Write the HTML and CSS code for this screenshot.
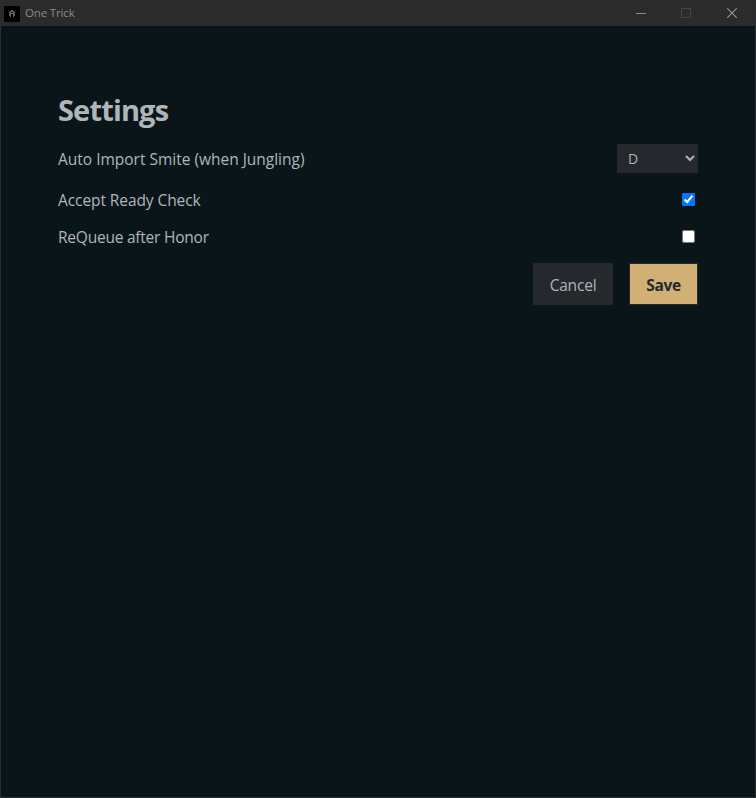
FILE: index.html
```html
<!DOCTYPE html>
<html lang="en">
<head>
<meta charset="utf-8">
<title>One Trick</title>
<link rel="stylesheet" href="styles.css">
</head>
<body>
<div class="window">
  <header class="titlebar">
    <svg class="app-icon" width="16" height="16" viewBox="0 0 16 16">
      <rect width="16" height="16" fill="#000"/>
      <path d="M7 4h2v1h1v1h1v4h-1v1H9V8H7v3H6v-1H5V6h1V5h1z" fill="#566067"/>
      <path d="M7 6h2v1H7z" fill="#1c2124"/>
    </svg>
    <span class="app-name">One Trick</span>
    <div class="controls">
      <svg class="minimize" width="10" height="10" viewBox="0 0 10 10"><path d="M0 5.5h10" stroke="#8a8a8a"/></svg>
      <svg width="10" height="10" viewBox="0 0 10 10"><path d="M.5.5h9v9h-9z" fill="none" stroke="#464646"/></svg>
      <svg class="close" width="10" height="10" viewBox="0 0 10 10"><path d="M.2.2l9.6 9.6M9.8.2L.2 9.8" stroke="#969696" stroke-width="1.1"/></svg>
    </div>
  </header>
  <main class="settings">
    <h1><span class="heading-text">Settings</span></h1>
    <label class="row row-select"><span class="smite">Auto Import Smite (when Jungling)</span>
      <select><option>D</option><option>F</option></select></label>
    <label class="row row-accept"><span class="accept">Accept Ready Check</span><input type="checkbox" checked></label>
    <label class="row row-requeue"><span class="requeue">ReQueue after Honor</span><input type="checkbox"></label>
    <div class="actions">
      <button class="cancel">Cancel</button>
      <button class="save">Save</button>
    </div>
  </main>
</div>
</body>
</html>
```
FILE: styles.css
```css
* { box-sizing: border-box; }
body {
  margin: 0;
  background: #0a151a;
  color: #b0b5b9;
  font: 15.5px/24px "Segoe UI", "Open Sans", "Noto Sans", sans-serif;
}
.window {
  height: 798px;
  border: 1px solid #2b2d2e;
  overflow: hidden;
}
.titlebar {
  display: flex;
  align-items: center;
  height: 25px;
  padding-left: 3px;
  background: #2b2b2b;
  color: #8a8a8a;
}
.app-icon { flex: none; }
.app-name {
  margin: 0 0 2px 5px;
  font-size: 11.5px;
  letter-spacing: -0.15px;
  white-space: nowrap;
}
.controls {
  display: flex;
  align-self: flex-start;
  margin: 7px 0 0 auto;
  padding-right: 18px;
}
.controls svg { display: block; }
.minimize { margin-right: 35px; }
.close { margin-left: 36px; }
.settings {
  width: 640px;
  margin: 66px 0 0 57px;
}
h1 {
  height: 36px;
  margin: 0 0 16px;
  font-size: 29px;
  line-height: 36px;
  font-weight: 700;
}
.heading-text { letter-spacing: -0.85px; }
.row {
  display: flex;
  justify-content: space-between;
  align-items: center;
  white-space: nowrap;
}
.smite { letter-spacing: -0.01px; }
.accept { letter-spacing: -0.08px; }
.requeue { letter-spacing: -0.23px; }
.row-select { height: 29px; }
.row-accept { height: 24px; margin-top: 15px; }
.row-requeue { height: 24px; margin-top: 13px; }
select {
  width: 81px;
  height: 29px;
  padding: 0 0 1px 7px;
  border: 0;
  border-radius: 0;
  background: #25282d;
  color: #b0b5b9;
  font: 14px "Segoe UI", "Open Sans", sans-serif;
}
input {
  width: 13px;
  height: 13px;
  margin: 0 3px 2px 4px;
}
.actions {
  display: flex;
  justify-content: flex-end;
  gap: 16px;
  margin-top: 14px;
}
button {
  height: 42px;
  padding: 1px 0 0;
  border: 1px solid #25282d;
  border-radius: 0;
  background: #25282d;
  color: #b0b5b9;
  font: inherit;
  letter-spacing: -0.2px;
}
.cancel { width: 80px; }
.save {
  width: 69px;
  background: #d2af74;
  color: #25282d;
  font-weight: 700;
  letter-spacing: -0.3px;
}
```
